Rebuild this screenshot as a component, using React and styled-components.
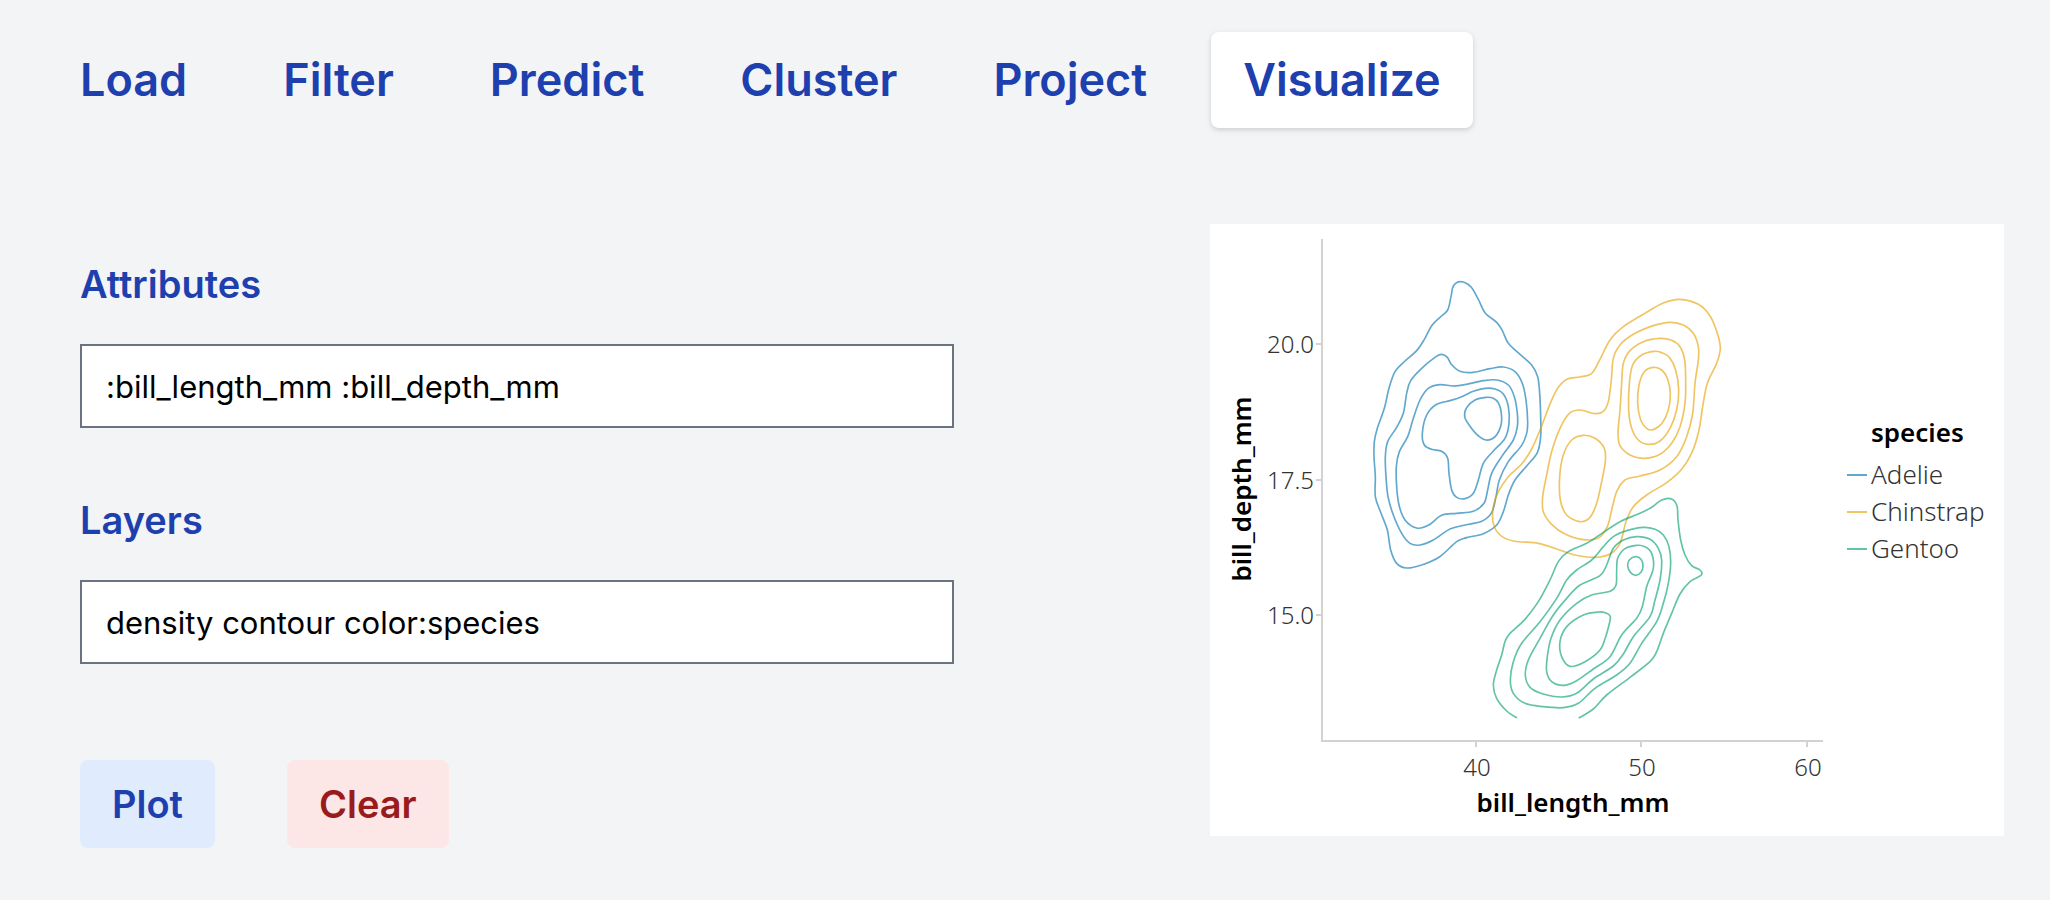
import React, { useState } from "react";
import styled, { createGlobalStyle } from "styled-components";

const GlobalStyle = createGlobalStyle`
  *, *::before, *::after {
    box-sizing: border-box;
  }
  body {
    margin: 0;
    background: #f3f4f6;
    font-family: Inter, "Liberation Sans", sans-serif;
  }
`;

const Page = styled.div`
  padding: 32px 46px 32px 48px;
`;

const Tabs = styled.nav`
  display: flex;
  flex-wrap: wrap;
  gap: 32px;
`;

const Tab = styled.button`
  padding: 16px 32px;
  border: 0;
  border-radius: 8px;
  background: ${(p) => (p.$active ? "#ffffff" : "transparent")};
  box-shadow: ${(p) =>
    p.$active
      ? "0 2px 6px rgba(0, 0, 0, 0.1), 0 2px 4px rgba(0, 0, 0, 0.06)"
      : "none"};
  color: #1e40af;
  font: 600 45px/64px Inter, "Liberation Sans", sans-serif;
  cursor: pointer;
`;

const Content = styled.main`
  display: grid;
  grid-template-columns: 874fr 794fr;
  gap: 256px;
  align-items: start;
  margin-top: 96px;
  padding-left: 32px;
`;

const Form = styled.form`
  display: flex;
  flex-direction: column;
  gap: 64px;
  padding-top: 32px;
`;

const Field = styled.div`
  display: flex;
  flex-direction: column;
  gap: 32px;
`;

const Label = styled.label`
  color: #1e40af;
  font-size: 38px;
  font-weight: 600;
  line-height: 56px;
`;

const TextInput = styled.input`
  width: 100%;
  height: 84px;
  padding: 16px 24px;
  border: 2px solid #6b7280;
  border-radius: 0;
  background: #ffffff;
  color: #000000;
  font: 400 31px/48px Inter, "Liberation Sans", sans-serif;
`;

const Actions = styled.div`
  display: flex;
  gap: 72px;
  margin-top: 32px;
`;

const tones = {
  blue: { text: "#1e40af", fill: "#e0ecfd" },
  red: { text: "#991b1b", fill: "#fde6e6" },
};

const ActionButton = styled.button`
  padding: 16px 32px;
  border: 0;
  border-radius: 8px;
  background: ${(p) => tones[p.$tone].fill};
  color: ${(p) => tones[p.$tone].text};
  font: 600 38px/56px Inter, "Liberation Sans", sans-serif;
  cursor: pointer;
`;

const Figure = styled.figure`
  margin: 0;
  background: #ffffff;
`;

const Chart = styled.svg`
  display: block;
  width: 100%;
  height: auto;
  font-family: "Noto Sans", "Open Sans", sans-serif;
`;

const AxisLine = styled.path`
  fill: none;
  stroke: #d2d2d2;
  stroke-width: 2;
`;

const TickText = styled.text`
  fill: #333333;
  font-size: 24px;
  font-weight: 300;
`;

const LegendText = styled(TickText)`
  font-size: 26px;
`;

const TitleText = styled.text`
  fill: #000000;
  font-size: 26px;
  font-weight: 600;
`;

const ContourPath = styled.path`
  fill: none;
  stroke-width: 5;
  stroke-opacity: 0.62;
  stroke-linejoin: round;
`;

/* Contour vertices are stored at three times the chart's unit. */
const species = [
  {
    name: "Adelie",
    color: "#0072b2",
    origin: [140, 36],
    closed: [
      "332,65 310,78 303,110 293,150 270,172 245,197 223,238 200,272 165,303 135,335 117,385 103,445 82,505 73,545 72,590 76,650 76,710 92,757 112,810 122,870 140,910 170,924 215,915 268,891 320,845 350,833 400,821 440,795 460,755 475,705 495,660 530,618 562,578 572,530 572,470 569,400 563,350 545,315 510,283 475,250 457,212 440,187 405,158 385,118 362,80",
      "276,283 258,290 215,325 182,362 170,400 160,460 140,502 113,545 106,590 108,650 114,710 130,765 155,820 180,850 210,855 250,840 300,807 345,795 395,784 425,758 438,710 448,660 475,605 515,556 530,520 533,485 528,420 517,370 495,335 460,321 420,326 370,337 330,334 305,314 292,292",
      "270,374 235,385 210,420 190,475 173,530 148,575 139,620 140,680 147,735 165,780 200,804 235,796 275,766 320,760 370,754 402,730 413,690 425,640 455,590 490,540 502,500 502,460 493,410 475,375 440,360 400,362 350,373 310,378",
      "300,422 260,433 230,465 217,520 223,555 245,568 275,574 293,595 297,640 305,690 320,712 345,716 370,700 385,660 400,610 430,573 465,535 477,490 475,440 460,402 435,387 405,385 370,394 335,410",
      "408,412 375,420 350,443 344,470 358,496 380,523 408,540 436,529 453,495 454,460 446,430 430,415",
    ],
    open: [],
  },
  {
    name: "Chinstrap",
    color: "#e69f00",
    origin: [270, 56],
    closed: [
      "600,58 550,69 500,97 430,140 390,180 360,238 335,280 300,291 262,297 235,322 213,365 182,445 155,507 125,552 85,590 55,635 40,680 40,730 60,765 100,783 175,790 230,807 285,825 345,832 390,822 420,790 438,725 460,680 500,645 560,608 605,568 637,515 657,450 668,380 682,310 710,250 721,205 712,160 690,108 655,73",
      "570,127 520,137 460,163 420,195 400,235 394,300 385,365 370,394 345,401 300,390 268,400 240,445 215,515 200,585 188,650 190,695 215,733 255,762 310,779 355,774 382,740 395,690 410,635 435,600 480,588 540,570 590,530 620,470 638,400 645,310 655,240 655,200 640,160 610,135",
      "540,175 490,185 450,212 430,250 425,310 420,390 414,460 420,497 450,525 495,535 540,523 575,490 600,440 615,370 617,300 614,240 600,200 575,181",
      "522,214 485,225 458,255 448,310 446,390 455,445 475,480 505,493 540,483 570,445 590,390 596,330 587,270 568,232 545,218",
      "520,262 493,275 477,315 473,370 482,420 500,445 520,449 546,430 565,390 571,340 562,295 545,270",
      "310,466 275,480 250,525 239,590 241,660 260,705 300,725 330,712 350,670 365,605 376,545 373,505 345,475",
    ],
    open: [],
  },
  {
    name: "Gentoo",
    color: "#009e73",
    origin: [260, 256],
    closed: [
      "520,142 470,152 430,170 400,200 365,240 320,270 290,300 260,355 210,425 155,490 130,545 121,600 130,640 165,670 220,680 280,683 325,670 375,625 440,585 480,550 515,490 560,425 580,370 595,310 602,250 597,200 580,165 555,148",
      "500,170 460,180 430,205 410,255 390,287 330,315 290,355 250,405 210,475 175,540 166,585 180,622 220,642 275,651 320,640 370,597 430,558 460,522 490,470 540,410 555,360 570,300 575,240 565,205 540,178",
      "500,196 465,206 443,235 440,275 438,315 420,334 365,345 320,370 270,420 243,475 232,530 230,575 245,605 280,616 320,602 370,567 420,530 455,465 500,415 517,380 530,320 550,265 545,220 525,200",
      "385,396 340,405 290,440 270,485 275,530 300,559 345,545 390,510 407,470 417,435 421,410 410,400",
      "497,230 478,240 473,258 482,278 497,286 513,277 519,257 513,238",
    ],
    open: [
      "141,714 110,693 80,655 70,615 80,570 95,525 105,485 120,460 165,418 205,365 240,300 265,245 295,215 350,190 400,157 450,125 510,100 545,82 575,60 605,57 621,78 624,120 632,180 645,225 665,257 690,270 694,285 660,305 630,342 605,400 580,460 560,515 540,545 480,592 410,645 370,687 326,714",
    ],
  },
];

/* Smooth curve through every vertex (Catmull-Rom converted to cubic Bezier). */
function curve(vertices, closed) {
  const pts = vertices.split(" ").map((v) => v.split(",").map(Number));
  const n = pts.length;
  const at = (i) =>
    closed ? pts[(i + n) % n] : pts[Math.max(0, Math.min(n - 1, i))];
  let d = `M${pts[0]}`;
  const segments = closed ? n : n - 1;
  for (let i = 0; i < segments; i += 1) {
    const [a, b, c, e] = [at(i - 1), at(i), at(i + 1), at(i + 2)];
    const c1 = [b[0] + (c[0] - a[0]) / 6, b[1] + (c[1] - a[1]) / 6];
    const c2 = [c[0] - (e[0] - b[0]) / 6, c[1] - (e[1] - b[1]) / 6];
    d += `C${c1} ${c2} ${c}`;
  }
  return closed ? `${d}Z` : d;
}

const yTicks = [
  { label: "20.0", y: 120 },
  { label: "17.5", y: 256 },
  { label: "15.0", y: 391 },
];

const xTicks = [
  { label: "40", x: 266 },
  { label: "50", x: 431 },
  { label: "60", x: 597 },
];

function DensityChart() {
  return (
    <Chart
      viewBox="0 0 794 612"
      role="img"
      aria-label="Density contours of bill_length_mm and bill_depth_mm by species"
    >
      <AxisLine d="M112 15V517H613" />
      {yTicks.map((t) => (
        <g key={t.label}>
          <AxisLine d={`M106 ${t.y}H112`} />
          <TickText x="104" y={t.y + 9} textAnchor="end">
            {t.label}
          </TickText>
        </g>
      ))}
      {xTicks.map((t) => (
        <g key={t.label}>
          <AxisLine d={`M${t.x} 517V523`} />
          <TickText x={t.x + 1} y="552" textAnchor="middle">
            {t.label}
          </TickText>
        </g>
      ))}
      <TitleText x="363" y="588" textAnchor="middle">
        bill_length_mm
      </TitleText>
      <TitleText transform="translate(41 265) rotate(-90)" textAnchor="middle">
        bill_depth_mm
      </TitleText>

      {species.map((s) => (
        <g
          key={s.name}
          stroke={s.color}
          transform={`translate(${s.origin}) scale(${1 / 3})`}
        >
          {s.open.map((v) => (
            <ContourPath key={v} d={curve(v, false)} />
          ))}
          {s.closed.map((v) => (
            <ContourPath key={v} d={curve(v, true)} />
          ))}
        </g>
      ))}

      <TitleText x="661" y="218">
        species
      </TitleText>
      {species.map((s, i) => (
        <g key={s.name}>
          <path
            d={`M637 ${251 + i * 37}h20`}
            stroke={s.color}
            strokeWidth="2"
            strokeOpacity="0.62"
          />
          <LegendText x="661" y={260 + i * 37}>
            {s.name}
          </LegendText>
        </g>
      ))}
    </Chart>
  );
}

const tabs = ["Load", "Filter", "Predict", "Cluster", "Project", "Visualize"];

export default function App() {
  const [active, setActive] = useState("Visualize");
  const [attributes, setAttributes] = useState(
    ":bill_length_mm :bill_depth_mm"
  );
  const [layers, setLayers] = useState("density contour color:species");

  const clear = () => {
    setAttributes("");
    setLayers("");
  };

  return (
    <>
      <GlobalStyle />
      <Page>
        <Tabs>
          {tabs.map((name) => (
            <Tab
              key={name}
              type="button"
              $active={name === active}
              aria-current={name === active ? "page" : undefined}
              onClick={() => setActive(name)}
            >
              {name}
            </Tab>
          ))}
        </Tabs>
        <Content>
          <Form onSubmit={(e) => e.preventDefault()}>
            <Field>
              <Label htmlFor="attributes">Attributes</Label>
              <TextInput
                id="attributes"
                type="text"
                value={attributes}
                onChange={(e) => setAttributes(e.target.value)}
              />
            </Field>
            <Field>
              <Label htmlFor="layers">Layers</Label>
              <TextInput
                id="layers"
                type="text"
                value={layers}
                onChange={(e) => setLayers(e.target.value)}
              />
            </Field>
            <Actions>
              <ActionButton type="submit" $tone="blue">
                Plot
              </ActionButton>
              <ActionButton type="button" $tone="red" onClick={clear}>
                Clear
              </ActionButton>
            </Actions>
          </Form>
          <Figure>
            <DensityChart />
          </Figure>
        </Content>
      </Page>
    </>
  );
}
